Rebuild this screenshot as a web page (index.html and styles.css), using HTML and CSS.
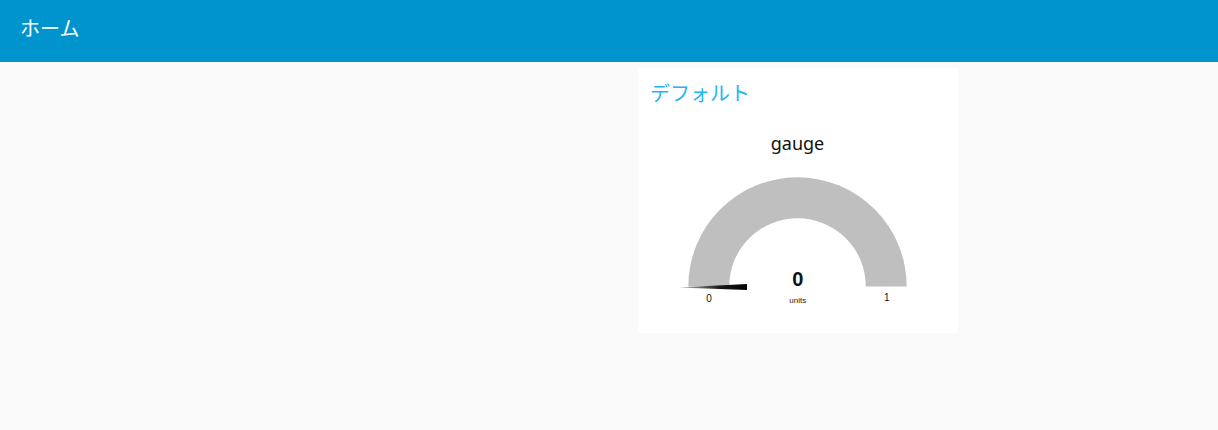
FILE: index.html
```html
<!doctype html>
<html>
  <head>
    <meta charset="utf-8" />
    <title>Node-RED Dashboard</title>
    <link rel="stylesheet" href="styles.css">
  </head>
  <body>
    <header class="toolbar">
      <h1 class="toolbar-title">ホーム</h1>
    </header>
    <main class="content">
      <section class="group">
        <h2 class="group-title">デフォルト</h2>
        <svg class="gauge" width="320" height="217" viewBox="0 0 320 217">
          <defs>
            <linearGradient id="needle" x1="0" y1="0" x2="1" y2="0">
              <stop offset="0" stop-color="#c8c8c8" />
              <stop offset="0.6" stop-color="#1a1a1a" />
              <stop offset="1" stop-color="#000" />
            </linearGradient>
          </defs>
          <text class="gauge-label" x="159.5" y="34">gauge</text>
          <path class="gauge-arc" d="M 50.3 170.5 A 109.2 109.2 0 0 1 268.7 170.5 L 227.8 170.5 A 68.3 68.3 0 0 0 91.2 170.5 Z" />
          <polygon points="40,171.5 109,168 109,174" fill="url(#needle)" />
          <text class="gauge-value" x="159.7" y="169.7">0</text>
          <text class="gauge-units" x="159.7" y="186.5">units</text>
          <text class="gauge-limit" x="71" y="186">0</text>
          <text class="gauge-limit" x="248.7" y="185">1</text>
        </svg>
      </section>
    </main>
  </body>
</html>
```

FILE: styles.css
```css
:root {
  --color-toolbar: #0094ce;
  --color-page: #fafafa;
  --color-group: #ffffff;
  --color-group-title: #1eb6f4;
  --color-gauge: #bfbfbf;
  --font-ui: "Noto Sans", "Noto Sans CJK JP", sans-serif;
}
* {
  margin: 0;
  padding: 0;
  box-sizing: border-box;
}
html,
body {
  height: 100%;
  background: var(--color-page);
  font-family: var(--font-ui);
}
.toolbar {
  height: 62px;
  background: var(--color-toolbar);
  padding: 18px 20px 0;
}
.toolbar-title {
  font-family: "Noto Sans CJK JP", sans-serif;
  font-size: 20px;
  line-height: 20px;
  font-weight: 400;
  color: #ffffff;
}
.content {
  display: flex;
  padding: 6px 0 0 638px;
}
.group {
  width: 320px;
  background: var(--color-group);
}
.group-title {
  font-family: "Noto Sans CJK JP", sans-serif;
  font-size: 20px;
  line-height: 20px;
  font-weight: 400;
  color: var(--color-group-title);
  padding: 15px 12px 13px;
}
.gauge {
  display: block;
}
.gauge-arc {
  fill: var(--color-gauge);
}
.gauge-label {
  font-family: "Noto Sans", sans-serif;
  font-size: 18px;
  fill: #111111;
  text-anchor: middle;
}
.gauge-value {
  font-family: "Liberation Sans", Arial, sans-serif;
  font-size: 20px;
  font-weight: 700;
  fill: #111111;
  text-anchor: middle;
}
.gauge-units {
  font-family: "Liberation Sans", Arial, sans-serif;
  font-size: 8px;
  fill: #222222;
  text-anchor: middle;
}
.gauge-limit {
  font-family: "Liberation Sans", Arial, sans-serif;
  font-size: 10px;
  fill: #111111;
  text-anchor: middle;
}
```
